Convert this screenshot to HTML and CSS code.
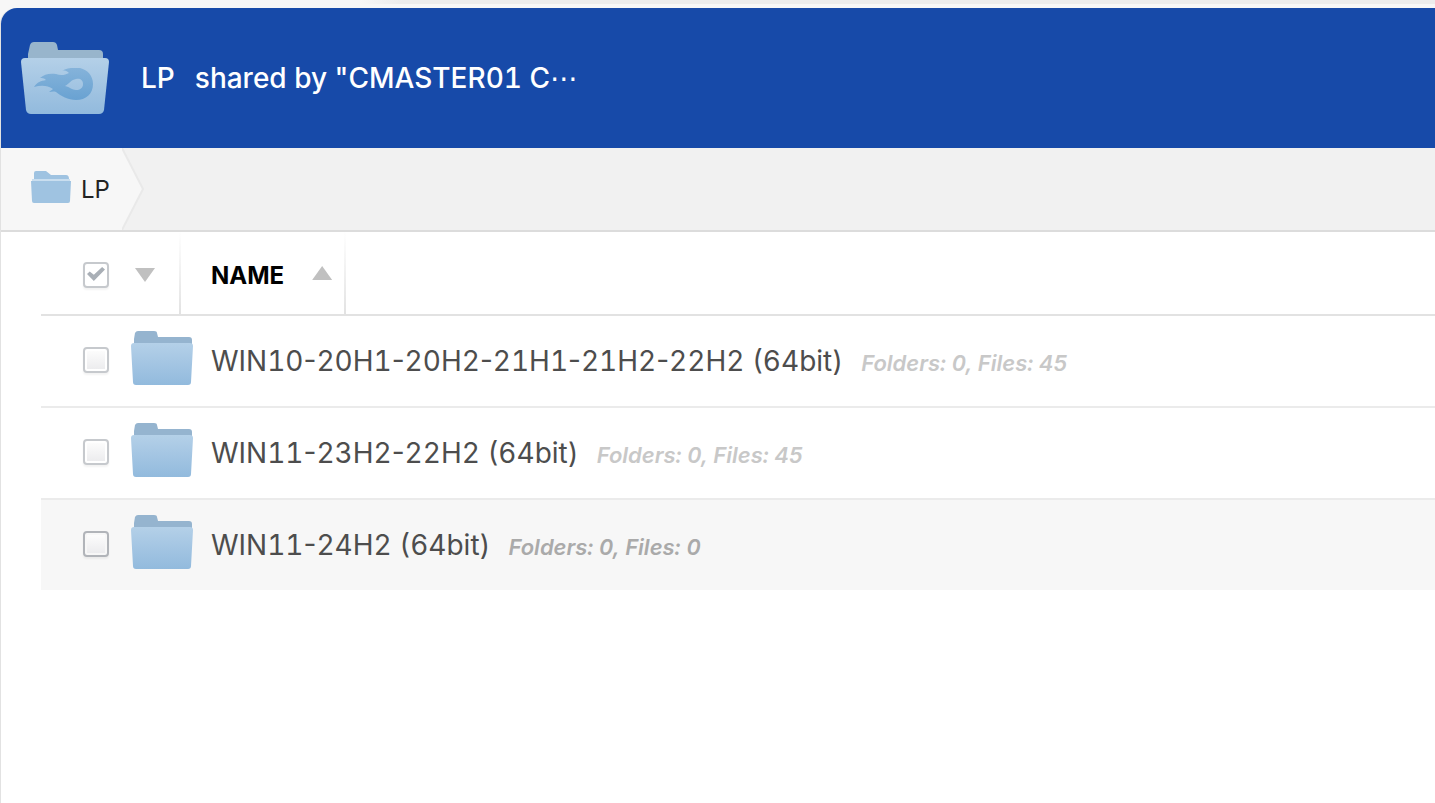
FILE: index.html
```html
<!DOCTYPE html>
<html lang="en">
  <head>
    <meta charset="UTF-8" />
    <meta name="viewport" content="width=device-width, initial-scale=1.0" />
    <title>LP</title>
    <link rel="stylesheet" href="styles.css">
  </head>
  <body>
    <svg class="defs" width="0" height="0" aria-hidden="true">
      <defs>
        <linearGradient id="front" x1="0" y1="0" x2="0" y2="1">
          <stop offset="0" stop-color="#b4d0e8" />
          <stop offset="1" stop-color="#92badd" />
        </linearGradient>
        <linearGradient id="flame" x1="0" y1="0" x2="0" y2="1">
          <stop offset="0" stop-color="#85b3da" />
          <stop offset="1" stop-color="#69a2d2" />
        </linearGradient>
      </defs>
      <symbol id="folder" viewBox="0 0 62 56">
        <path fill="#95b4cf" d="M3 16V9l1-6q1-2 3-2h16q3 0 3 2l1 4h31q3 0 3 3v8H3z" />
        <path fill="url(#front)" d="M3 13h56q3 0 3 3l-2 36q0 3-3 3H5q-3 0-3-3L0 16q0-3 3-3z" />
      </symbol>
    </svg>

    <div class="top-strip"></div>
    <div class="page">
      <header class="share-header">
        <svg class="share-icon" width="88" height="72" viewBox="0 0 88 72" aria-hidden="true">
          <path fill="#98b5cc" d="M7 18V12L9 3q1-3 4-3h19q3 0 4 3l1 5h41q4 0 4 4v8H7z" />
          <path fill="url(#front)" d="M4 16h80q4 0 4 4l-5 48q-1 4-5 4H10q-4 0-5-4L0 20q0-4 4-4z" />
          <path fill="url(#flame)" fill-rule="evenodd" d="M13 45C16 40 20 39 25 38C23 36 21 36 19 36C23 32 29 31 35 32C40 34 44 33 48 31C46 29 44 28 41 29C46 25 54 26 59 26C67 28 72 34 72 42C72 52 65 58 55 58C47 58 40 54 35 50C32 49 30 50 28 50C29 49 31 48 32 47C26 43 20 43 13 45ZM44 44C49 45 51 48 55 48C59 48 62 46 62 42C62 38 59 36 55 37C50 38 49 41 44 44Z" />
        </svg>
        <h1 class="share-title">
          <span>LP</span>
          <span>shared by "CMASTER01 C<span class="more">⋯</span></span>
        </h1>
      </header>

      <nav class="breadcrumb" aria-label="Folder path">
        <a class="crumb" href="#">
          <svg width="40" height="36" viewBox="0 0 40 36" aria-hidden="true">
            <path fill="#9fc3e1" d="M3 8V2q0-2 2-2h10l5 4h15q3 0 3 4z" />
            <path fill="#c9deef" d="M1 8h38v2H1z" />
            <path fill="#9fc3e1" d="M0 10h40l-1 20q0 2-2 2H3q-2 0-2-2z" />
          </svg>
          <span>LP</span>
        </a>
        <svg class="crumb-arrow" width="22" height="82" viewBox="0 0 22 82" aria-hidden="true">
          <path fill="#f7f7f7" d="M0 0L21 41L0 82z" />
          <path fill="none" stroke="#e9e9e9" stroke-width="2" d="M0 0L21 41L0 82" />
        </svg>
      </nav>

      <main class="files">
        <div class="list-header">
          <div class="select-col">
            <input class="check" type="checkbox" checked aria-label="Select all" />
            <button class="arrow down" aria-label="Selection options"></button>
          </div>
          <button class="name-col">NAME <span class="arrow up"></span></button>
        </div>

        <ul class="list">
          <li class="row">
            <input class="check" type="checkbox" id="f1" />
            <svg class="folder" width="62" height="56" aria-hidden="true"><use href="#folder" /></svg>
            <label class="name" for="f1">WIN10<i>-</i>20H1<i>-</i>20H2<i>-</i>21H1<i>-</i>21H2<i>-</i>22H2 (64bit)</label>
            <span class="meta">Folders: 0, Files: 45</span>
          </li>
          <li class="row">
            <input class="check" type="checkbox" id="f2" />
            <svg class="folder" width="62" height="56" aria-hidden="true"><use href="#folder" /></svg>
            <label class="name" for="f2">WIN11<i>-</i>23H2<i>-</i>22H2 (64bit)</label>
            <span class="meta">Folders: 0, Files: 45</span>
          </li>
          <li class="row active">
            <input class="check" type="checkbox" id="f3" />
            <svg class="folder" width="62" height="56" aria-hidden="true"><use href="#folder" /></svg>
            <label class="name" for="f3">WIN11<i>-</i>24H2 (64bit)</label>
            <span class="meta">Folders: 0, Files: 0</span>
          </li>
        </ul>
      </main>
    </div>
  </body>
</html>
```

FILE: styles.css
```css
* {
  box-sizing: border-box;
}

body {
  margin: 0;
  min-height: 100vh;
  display: flex;
  flex-direction: column;
  font-family: Inter, "Noto Sans CJK SC", sans-serif;
  font-variant-numeric: tabular-nums;
  background: #f7f7f7;
}

.defs {
  position: absolute;
}

.top-strip {
  height: 8px;
  background: linear-gradient(90deg, #f7f7f7 25%, #ececec 28%) no-repeat;
  background-size: 100% 4px;
}

.page {
  flex: 1;
  background: #fff;
  border-left: 1px solid #e2e2e2;
  border-top-left-radius: 16px;
}

/* header */
.share-header {
  display: flex;
  align-items: center;
  gap: 32px;
  height: 140px;
  padding: 0 20px;
  background: #174aa9;
  border-top-left-radius: 16px;
}

.share-title {
  display: flex;
  align-items: baseline;
  gap: 20px;
  margin: 0;
  color: #fff;
  font-size: 28px;
  font-weight: 500;
  line-height: 40px;
}

.more {
  font-family: "DejaVu Sans", sans-serif;
  line-height: 1;
}

/* breadcrumb */
.breadcrumb {
  display: flex;
  height: 84px;
  background: #f1f1f1;
  border-bottom: 2px solid #dcdcdc;
}

.crumb {
  display: flex;
  align-items: center;
  gap: 10px;
  padding: 0 12px 0 30px;
  background: #f7f7f7;
  color: #222;
  font-size: 24px;
  text-decoration: none;
}

/* file list */
.files {
  padding-left: 40px;
}

.list-header {
  display: flex;
  height: 84px;
  border-bottom: 2px solid #e2e2e2;
}

.select-col,
.name-col {
  display: flex;
  align-items: center;
  border: 0 solid;
  border-right-width: 2px;
  border-image: linear-gradient(#fff, #e2e2e2) 1;
}

.select-col {
  gap: 26px;
  width: 140px;
  padding: 4px 0 0 42px;
}

.name-col {
  gap: 28px;
  padding: 4px 12px 0 30px;
  background: none;
  color: #000;
  font-family: inherit;
  font-size: 24px;
  font-weight: 700;
}

.arrow {
  width: 20px;
  height: 14px;
  padding: 0;
  border: none;
  background: #c0c0c0;
}

.arrow.down {
  clip-path: polygon(0 0, 100% 0, 50% 100%);
}

.arrow.up {
  margin-bottom: 4px;
  clip-path: polygon(50% 0, 100% 100%, 0 100%);
}

.check {
  appearance: none;
  flex: none;
  width: 26px;
  height: 26px;
  margin: 0;
  border: 2px solid #c6c9cd;
  border-radius: 4px;
  background: linear-gradient(#fcfcfc, #ececee) content-box #fff;
  padding: 2px;
  box-shadow: 0 2px 2px #0000000d;
}

.check:checked {
  padding: 0;
  background: #fff;
}

.check:checked::before {
  content: "";
  display: block;
  width: 18px;
  height: 14px;
  margin: 3px 2px;
  background: #a9afb6;
  clip-path: polygon(0 50%, 15% 33%, 38% 55%, 84% 0, 100% 17%, 38% 100%);
}

.list {
  margin: 0;
  padding: 0;
  list-style: none;
}

.row {
  display: flex;
  align-items: center;
  height: 92px;
  padding: 0 42px;
  border-bottom: 2px solid #ebebeb;
}

.row:last-child {
  height: 90px;
  border-bottom: none;
}

.row .check {
  margin-bottom: 2px;
}

.folder {
  flex: none;
  margin: 0 18px 6px 22px;
}

.name {
  color: #4d4d4d;
  font-size: 28px;
  line-height: 40px;
}

/* cap-height hyphen, not the tabular one */
.name i {
  font-style: normal;
  font-variant-numeric: normal;
  font-feature-settings: "case";
}

.meta {
  margin-left: 18px;
  padding-top: 4px;
  color: #c8c8c8;
  font-size: 22px;
  font-style: italic;
  font-weight: 600;
}

.row.active {
  background: #f7f7f7;
}

.active .check {
  border-color: #b1b4b9;
}

.active .meta {
  color: #aaa;
}
```
